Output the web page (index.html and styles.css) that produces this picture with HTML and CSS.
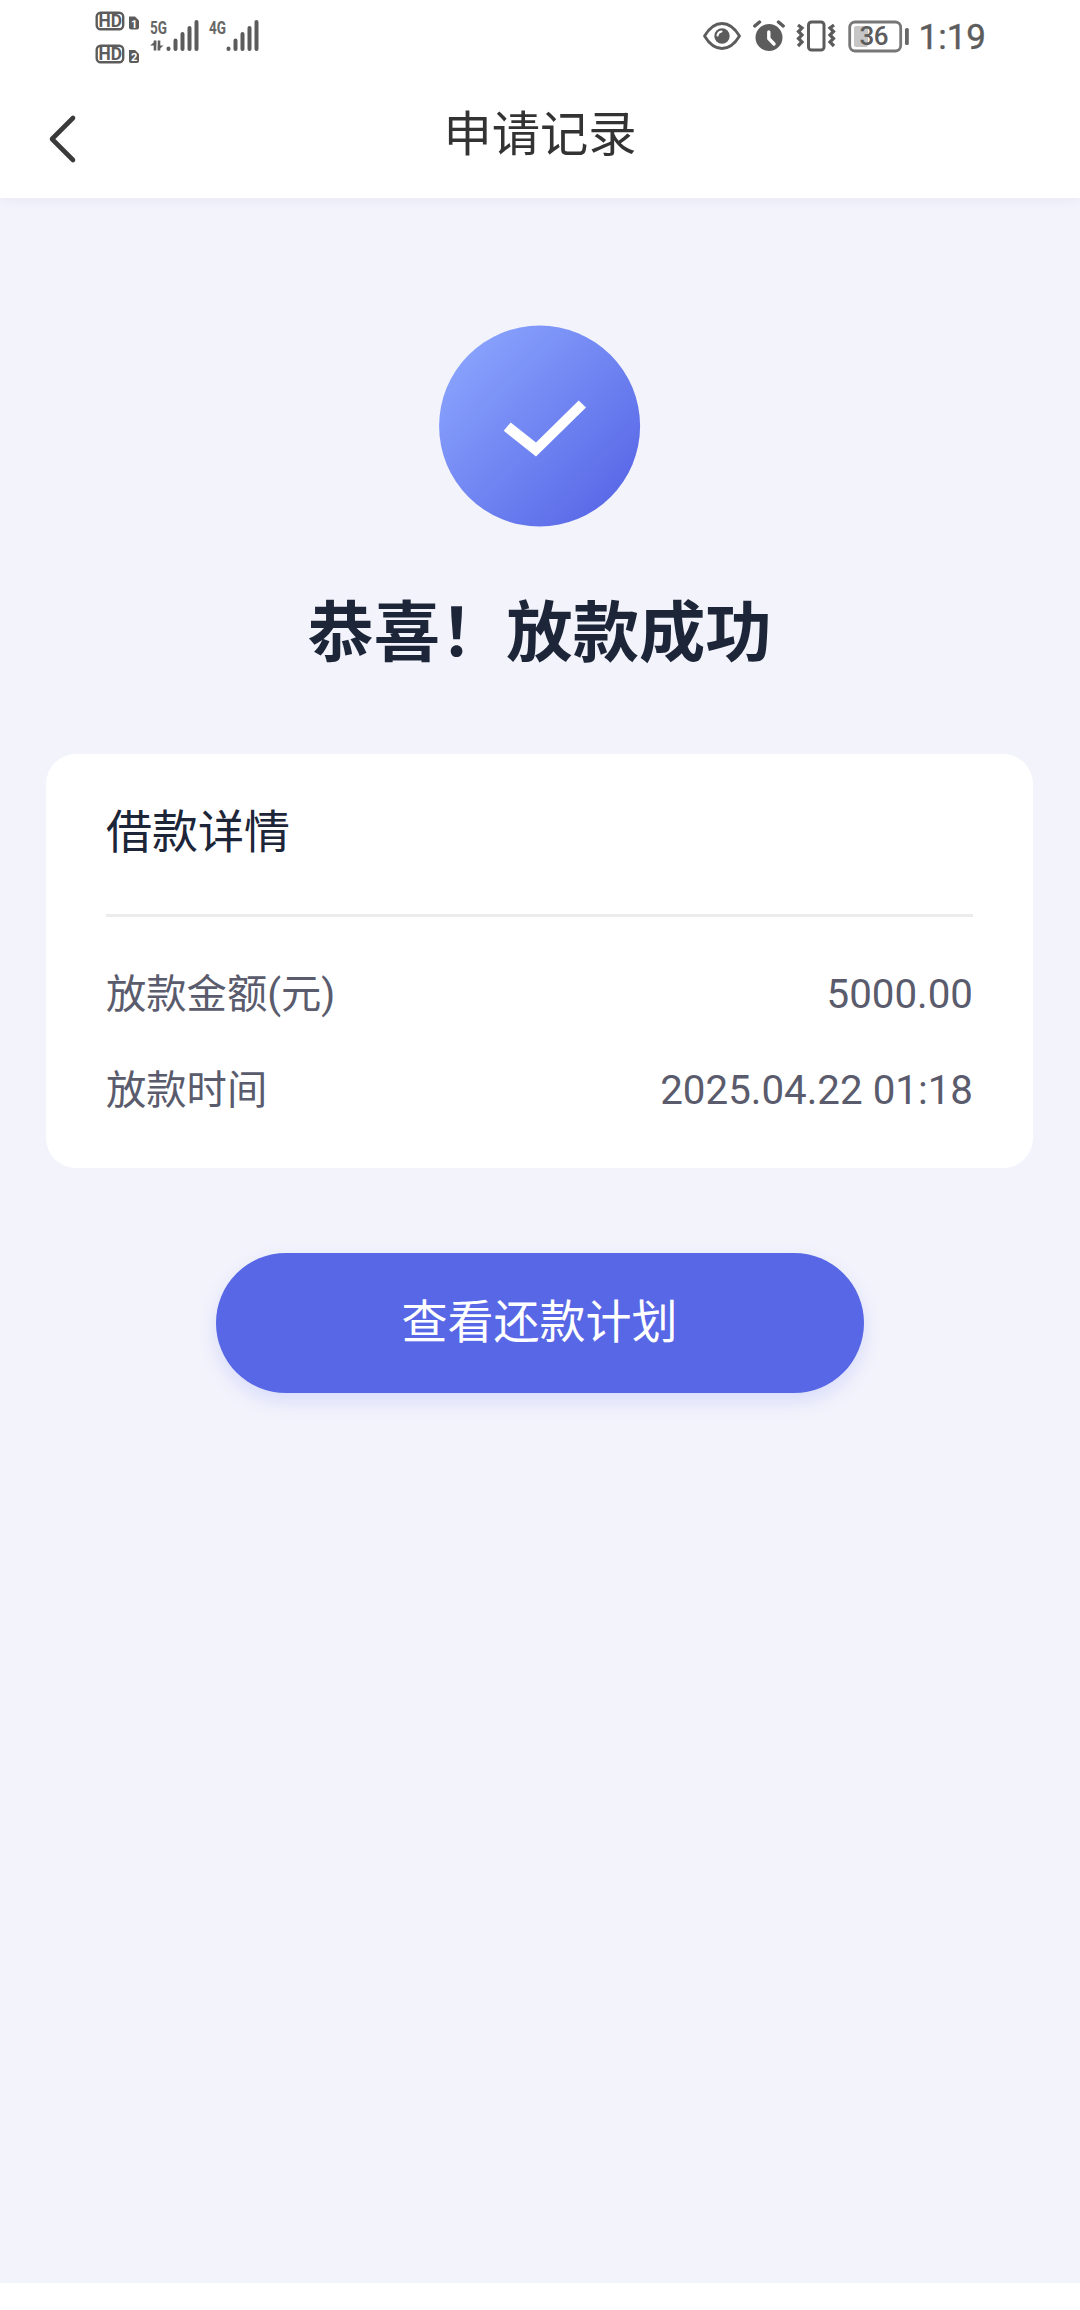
FILE: index.html
```html
<!DOCTYPE html>
<html lang="zh-CN">
<head>
<meta charset="utf-8">
<title>申请记录</title>
<link rel="stylesheet" href="styles.css">
</head>
<body>
<div class="screen">
  <header class="header">
    <div class="status">
      <div class="status-left">
        <svg class="hd" width="46" height="60" viewBox="0 -3 46 60">
          <g fill="none" stroke="#5c5c5c" stroke-width="2.400">
            <rect x="1.700" y="1.700" width="26.500" height="16.500" rx="4"/>
            <rect x="1.700" y="34.700" width="26.500" height="16.500" rx="4"/>
          </g>
          <g fill="#5c5c5c">
            <path d="M34 5.500h6l4 4v7q0 2-2 2h-6q-2 0-2-2z"/>
            <path d="M34 39h6l4 4v7q0 2-2 2h-6q-2 0-2-2z"/>
          </g>
          <g class="hd-text">
            <text x="3.500" y="15.800" textLength="23.500" lengthAdjust="spacingAndGlyphs">HD</text>
            <text x="3.500" y="48.800" textLength="23.500" lengthAdjust="spacingAndGlyphs">HD</text>
          </g>
          <g class="sim-text">
            <text x="36" y="16.500">1</text>
            <text x="36" y="50">2</text>
          </g>
        </svg>
        <svg class="signal signal-5g" width="52" height="42" viewBox="0 -6 52 42">
          <text class="net" x="0" y="15" textLength="17" lengthAdjust="spacingAndGlyphs">5G</text>
          <path d="M5 21.500V31.500M9 21.500V31.500" stroke="#5c5c5c" stroke-width="2.600"/>
          <path d="M6.200 21.500V26.500H0ZM7.800 31.500V26.500H13.500Z" fill="#5c5c5c"/>
          <path d="M18.500 29.500v.5M25.500 21.500v8.500M32.500 15v15M39.500 9v21M46.500 3v27" stroke="#5c5c5c" stroke-width="4" stroke-linecap="round"/>
        </svg>
        <svg class="signal" width="52" height="42" viewBox="0 -6 52 42">
          <text class="net" x="0" y="15" textLength="17" lengthAdjust="spacingAndGlyphs">4G</text>
          <path d="M19.500 29.500v.5M26.500 21.500v8.500M33.500 15v15M40.500 9v21M47.500 3v27" stroke="#5c5c5c" stroke-width="4" stroke-linecap="round"/>
        </svg>
      </div>
      <div class="status-right">
        <svg width="38" height="34" viewBox="0 0 38 34">
          <path d="M1.500 17Q9 4.500 19 4.500T36.500 17Q29 29.500 19 29.500T1.500 17Z" fill="none" stroke="#5c5c5c" stroke-width="2.800" stroke-linejoin="round"/>
          <circle cx="19" cy="17" r="7.700" fill="#5c5c5c"/>
          <path d="M14.500 16.500Q15 13 18.500 12.500" fill="none" stroke="#fff" stroke-width="2" stroke-linecap="round"/>
        </svg>
        <svg class="alarm" width="32" height="34" viewBox="0 0 32 34">
          <circle cx="16" cy="18.500" r="13.500" fill="#5c5c5c"/>
          <path d="M1.800 7L6.500 3M25.500 3L30.200 7" stroke="#5c5c5c" stroke-width="3.400" stroke-linecap="round"/>
          <path d="M15.800 13V19.500L21 25" fill="none" stroke="#fff" stroke-width="3.400" stroke-linecap="round" stroke-linejoin="round"/>
        </svg>
        <svg class="vibrate" width="42" height="34" viewBox="0 0 42 34">
          <rect x="13.500" y="3" width="15.500" height="28" rx="3" fill="none" stroke="#5c5c5c" stroke-width="3"/>
          <path d="M3 6L7 9 3.500 12.500 7 16 3.500 19.500 7 23 3 27M39 6L35 9 38.500 12.500 35 16 38.500 19.500 35 23 39 27" fill="none" stroke="#5c5c5c" stroke-width="3.200"/>
        </svg>
        <svg class="battery" width="62" height="34" viewBox="0 0 62 34">
          <rect x="1.700" y="3" width="51" height="29" rx="5.500" fill="#fff" stroke="#777" stroke-width="2.800"/>
          <rect x="6" y="7" width="14" height="21" rx="2" fill="#c6c6c6"/>
          <rect x="57" y="9" width="3.800" height="17" rx="1.500" fill="#666"/>
          <text class="battery-text" x="11.500" y="26.300" textLength="29" lengthAdjust="spacing">36</text>
        </svg>
        <span class="time">1:19</span>
      </div>
    </div>
    <div class="nav">
      <svg class="back" width="30" height="50" viewBox="0 0 30 50">
        <path d="M25 4L4 25L25 46" fill="none" stroke="#3a3a3a" stroke-width="4.600" stroke-linecap="round" stroke-linejoin="round"/>
      </svg>
      <h1 class="title">申请记录</h1>
    </div>
  </header>
  <main class="content">
    <svg class="success" width="202" height="202" viewBox="0 0 202 202">
      <defs>
        <linearGradient id="disc" x1=".1" y1=".12" x2=".9" y2=".88">
          <stop offset="0" stop-color="#89a3fd"/>
          <stop offset="1" stop-color="#5968e7"/>
        </linearGradient>
      </defs>
      <circle cx="100.600" cy="101" r="100.500" fill="url(#disc)"/>
      <path d="M71.700 97.500L64.700 105.800L97 131.500L147 82.500L139.700 75.500L97 117.500Z" fill="#fff"/>
    </svg>
    <h2 class="message">恭喜！放款成功</h2>
    <section class="card">
      <h3 class="card-title">借款详情</h3>
      <dl class="details">
        <div class="row"><dt>放款金额(元)</dt><dd>5000.00</dd></div>
        <div class="row"><dt>放款时间</dt><dd>2025.04.22 01:18</dd></div>
      </dl>
    </section>
    <button class="plan" type="button">查看还款计划</button>
  </main>
</div>
</body>
</html>
```
FILE: styles.css
```css
* {
  box-sizing: border-box;
  margin: 0;
  padding: 0;
}

body {
  background: #fff;
  font-family: "Noto Sans CJK SC", sans-serif;
}

svg {
  overflow: visible;
}

.screen {
  display: flex;
  flex-direction: column;
  height: 2310px;
  padding-bottom: 27px;
}

.header {
  height: 198px;
  background: #fff;
  box-shadow: 0 2px 12px rgba(60, 60, 130, 0.06);
  z-index: 1;
}

.status {
  display: flex;
  justify-content: space-between;
  height: 72px;
  padding: 0 94px 0 95px;
  color: #5c5c5c;
}

.status-left,
.status-right {
  display: flex;
  align-items: flex-start;
}

.status-left {
  padding-top: 8px;
}

.status-right {
  padding-top: 19px;
}

.signal {
  margin: 5px 0 0 7px;
}

.signal-5g {
  margin-left: 9px;
}

.hd-text {
  font: 700 18px Roboto, sans-serif;
  fill: #5c5c5c;
}

.sim-text {
  font: 700 11px Roboto, sans-serif;
  fill: #fff;
}

.net {
  font: 700 19px Roboto, sans-serif;
  fill: #666;
}

.alarm {
  margin-left: 12px;
}

.vibrate {
  margin-left: 10px;
}

.battery {
  margin-left: 11px;
}

.battery-text {
  font: 500 26px Roboto, sans-serif;
  fill: #5c5c5c;
}

.time {
  margin-left: 9px;
  font: 400 35px/38px Roboto, sans-serif;
  -webkit-text-stroke: 0.4px #5c5c5c;
}

.nav {
  display: grid;
  grid-template-columns: 78px 1fr 78px;
  align-items: center;
  height: 116px;
}

.back {
  margin: 18px 0 0 48px;
}

.title {
  text-align: center;
  font-size: 48.3px;
  line-height: 70px;
  font-weight: 400;
  color: #333;
}

.content {
  flex: 1;
  display: flex;
  flex-direction: column;
  align-items: center;
  padding: 127px 47px 0 46px;
  background: #f2f3fb;
}

.message {
  margin-top: 52px;
  font-size: 66.3px;
  line-height: 96px;
  font-weight: 700;
  color: #1d2538;
}

.card {
  width: 987px;
  height: 414px;
  margin-top: 79px;
  padding: 0 60px;
  border-radius: 30px;
  background: #fff;
}

.card-title {
  height: 163px;
  padding-top: 39px;
  border-bottom: 3px solid #ececec;
  font-size: 46px;
  line-height: 70px;
  font-weight: 400;
  color: #1d2538;
}

.details {
  display: flex;
  flex-direction: column;
  gap: 36px;
  padding-top: 48px;
}

.row {
  display: flex;
  justify-content: space-between;
  font-family: Roboto, "Noto Sans CJK SC", sans-serif;
  font-size: 40.3px;
  line-height: 60px;
  color: #5a5b6c;
}

.plan {
  width: 648px;
  height: 140px;
  margin-top: 85px;
  padding-bottom: 11px;
  border: 0;
  border-radius: 70px;
  background: #5767e5;
  box-shadow: 0 8px 18px rgba(87, 103, 255, 0.16);
  font-family: inherit;
  font-size: 46px;
  line-height: 66px;
  color: #fff;
}
```
